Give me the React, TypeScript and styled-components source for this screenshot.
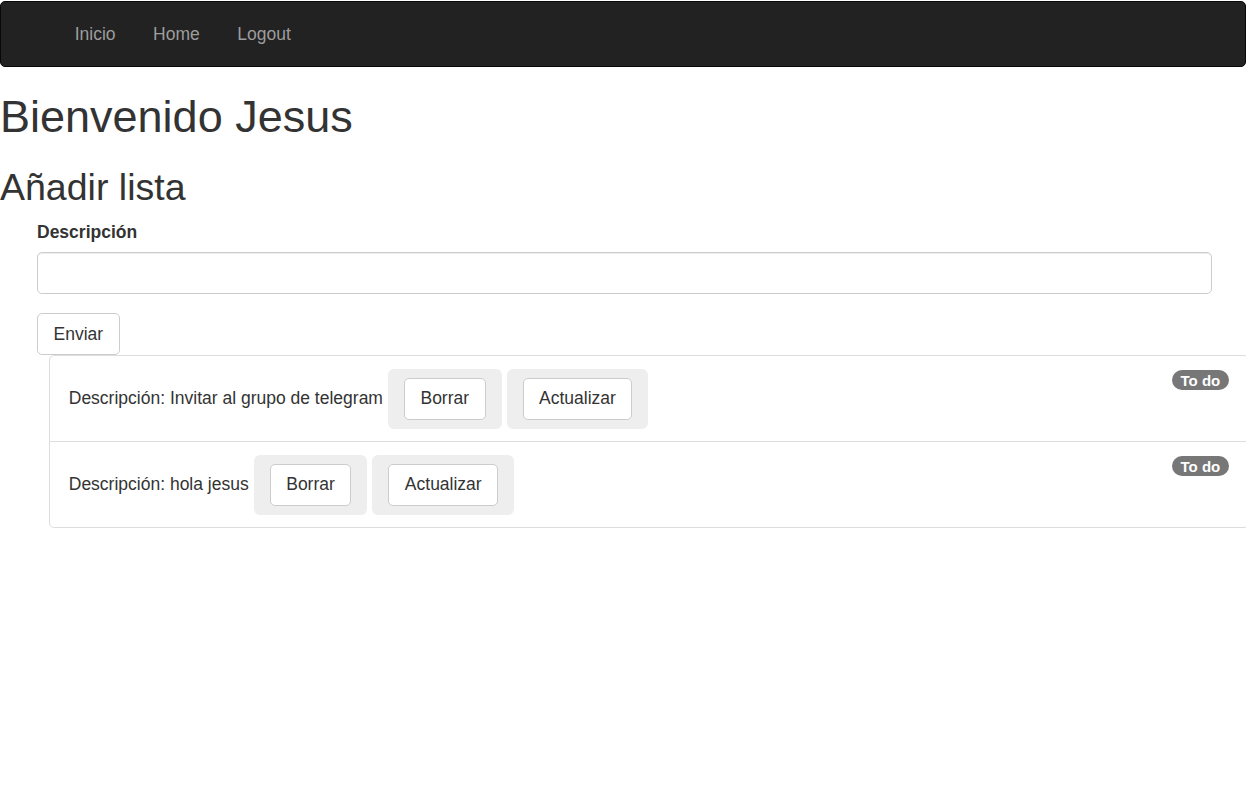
import React from "react";
import styled, { createGlobalStyle } from "styled-components";

const Global = createGlobalStyle`
  html, body { margin: 0; padding: 0; background: #fff; }
  body {
    font-family: "Liberation Sans", Arial, Helvetica, sans-serif;
    font-size: 17.5px;
    line-height: 1.42857;
    color: #333;
  }
  * { box-sizing: border-box; }
`;

const Navbar = styled.nav`
  margin-top: 1px;
  height: 66px;
  background: #222;
  border: 1px solid #080808;
  border-radius: 5px;
  display: flex;
  align-items: center;
  padding-left: 55px;
`;

const NavLink = styled.a`
  color: #9d9d9d;
  font-size: 17.5px;
  padding: 0 18.75px;
  text-decoration: none;
  line-height: 25px;
  cursor: pointer;
`;

const Title = styled.h1`
  font-size: 45px;
  font-weight: 500;
  line-height: 1.1;
  margin: 25px 0 12.5px;
  color: #333;
`;

const Subtitle = styled.h2`
  font-size: 37.5px;
  font-weight: 500;
  line-height: 1.1;
  margin: 25px 0 12.5px;
  color: #333;
`;

const Form = styled.form`
  margin: 0 34px 0 37px;
  display: flex;
  flex-direction: column;
  align-items: flex-start;
`;

const Label = styled.label`
  font-weight: bold;
  margin-bottom: 7px;
  line-height: 25px;
`;

const Input = styled.input`
  width: 100%;
  height: 42px;
  border: 1px solid #ccc;
  border-radius: 5px;
  box-shadow: inset 0 1px 1px rgba(0, 0, 0, 0.075);
  margin-bottom: 19px;
  font-size: 17.5px;
  padding: 8px 15px;
`;

const Button = styled.button`
  height: 42px;
  padding: 0 15.5px;
  background: #fff;
  border: 1px solid #ccc;
  border-radius: 5px;
  font-family: inherit;
  font-size: 17.5px;
  color: #333;
  cursor: pointer;
`;

const List = styled.ul`
  list-style: none;
  margin: 0 0 0 49px;
  padding: 0;
  width: 1200px;
`;

const Item = styled.li<{ $first?: boolean; $last?: boolean }>`
  display: flex;
  align-items: center;
  gap: 5px;
  padding: 12.5px 18.75px;
  border: 1px solid #ddd;
  margin-bottom: ${(p) => (p.$last ? "0" : "-1px")};
  position: relative;
  border-radius: ${(p) =>
    p.$first ? "5px 5px 0 0" : p.$last ? "0 0 5px 5px" : "0"};
`;

const ItemText = styled.span``;

const Well = styled.div`
  background: #eee;
  border-radius: 6px;
  padding: 9px 16px;
  display: flex;
`;

const Badge = styled.span`
  position: absolute;
  right: 19px;
  top: 14px;
  background: #777;
  color: #fff;
  font-weight: bold;
  font-size: 15px;
  line-height: 1;
  padding: 3px 8.75px 2px;
  border-radius: 12px;
`;

const items = ["Invitar al grupo de telegram", "hola jesus"];

export default function App() {
  return (
    <>
      <Global />
      <Navbar>
        <NavLink>Inicio</NavLink>
        <NavLink>Home</NavLink>
        <NavLink>Logout</NavLink>
      </Navbar>
      <Title>Bienvenido Jesus</Title>
      <Subtitle>Añadir lista</Subtitle>
      <Form onSubmit={(e) => e.preventDefault()}>
        <Label>Descripción</Label>
        <Input type="text" />
        <Button type="submit">Enviar</Button>
      </Form>
      <List>
        {items.map((t, i) => (
          <Item key={t} $first={i === 0} $last={i === items.length - 1}>
            <ItemText>Descripción: {t}</ItemText>
            <Well>
              <Button>Borrar</Button>
            </Well>
            <Well>
              <Button>Actualizar</Button>
            </Well>
            <Badge>To do</Badge>
          </Item>
        ))}
      </List>
    </>
  );
}
